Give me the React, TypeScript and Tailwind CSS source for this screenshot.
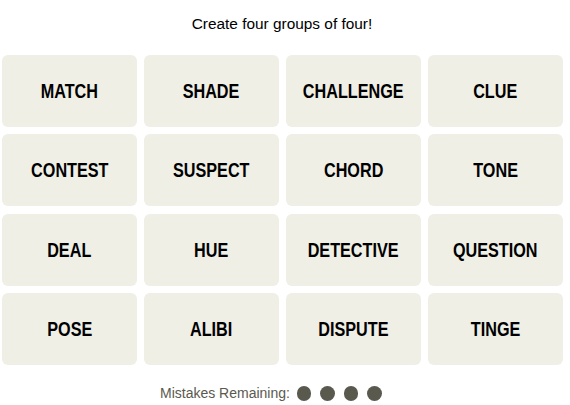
import React from "react";

const words = [
  "MATCH", "SHADE", "CHALLENGE", "CLUE",
  "CONTEST", "SUSPECT", "CHORD", "TONE",
  "DEAL", "HUE", "DETECTIVE", "QUESTION",
  "POSE", "ALIBI", "DISPUTE", "TINGE",
];

export default function App() {
  return (
    <div className="w-[570px] h-[405px] bg-white overflow-hidden">
      <div className="pt-[14px] pr-[6px] h-[55px] text-center text-[15.4px] leading-[20px] text-black font-['Liberation_Sans',sans-serif]">
        Create four groups of four!
      </div>
      <div className="ml-[2px] w-[561px] grid grid-cols-4 gap-x-[7px] gap-y-[7.33px]">
        {words.map((w) => (
          <div
            key={w}
            className="h-[72px] rounded-[6px] bg-[#efefe6] flex items-center justify-center text-black"
          >
            <span className="inline-block scale-x-[0.81] font-bold text-[20px] leading-[24px] font-['Liberation_Sans',sans-serif] whitespace-nowrap">
              {w}
            </span>
          </div>
        ))}
      </div>
      <div className="mt-[21px] h-[15px] pl-[160px] flex items-center">
        <span className="text-[14px] leading-[15px] text-[#5a594e] font-['Liberation_Sans',sans-serif]">
          Mistakes Remaining:
        </span>
        <div className="ml-[7px] flex gap-[9px]">
          <span className="w-[14.5px] h-[14.5px] rounded-full bg-[#5a594e]" />
          <span className="w-[14.5px] h-[14.5px] rounded-full bg-[#5a594e]" />
          <span className="w-[14.5px] h-[14.5px] rounded-full bg-[#5a594e]" />
          <span className="w-[14.5px] h-[14.5px] rounded-full bg-[#5a594e]" />
        </div>
      </div>
    </div>
  );
}
